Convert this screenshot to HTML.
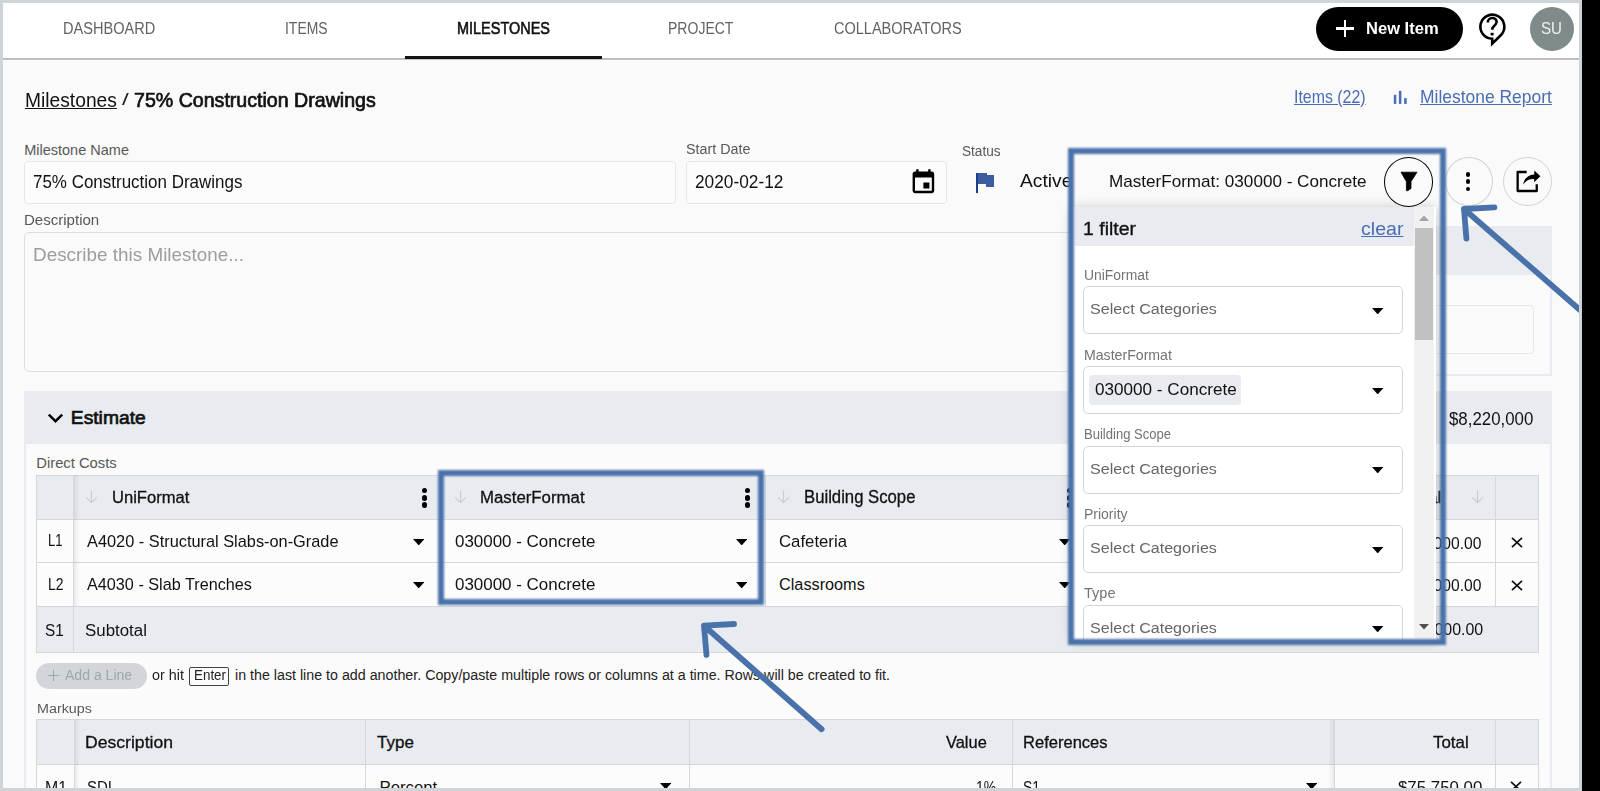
<!DOCTYPE html><html><head><meta charset="utf-8"><style>
html,body{margin:0;padding:0;width:1600px;height:791px;overflow:hidden;background:#000;}
.b{position:absolute;}
.t{position:absolute;white-space:nowrap;line-height:1;font-family:"Liberation Sans",sans-serif;transform-origin:0 0;}
</style></head><body>
<div class="b " style="left:0px;top:0px;width:1600px;height:791px;background:#000;"></div>
<div class="b " style="left:0px;top:0px;width:1582px;height:791px;background:#cfd4d8;"></div>
<div class="b " style="left:3px;top:3px;width:1576px;height:785px;background:#fafafa;"></div>
<div class="b " style="left:3px;top:3px;width:1576px;height:55px;background:#fff;"></div>
<div class="b " style="left:3px;top:58px;width:1576px;height:2px;background:linear-gradient(#b4b4b4,#c8c8c8);"></div>
<div class="b " style="left:405px;top:56px;width:197px;height:3px;background:#151515;"></div>
<div class="t" style="left:62.50px;top:21px;font-size:16.75px;color:#626262;transform:scaleX(0.8698);">DASHBOARD</div>
<div class="t" style="left:284.80px;top:21px;font-size:16.75px;color:#626262;transform:scaleX(0.8325);">ITEMS</div>
<div class="t" style="left:457.20px;top:21px;font-size:16.75px;color:#111;transform:scaleX(0.8635);-webkit-text-stroke:0.6px #111;">MILESTONES</div>
<div class="t" style="left:668.00px;top:21px;font-size:16.75px;color:#626262;transform:scaleX(0.8370);">PROJECT</div>
<div class="t" style="left:834.00px;top:21px;font-size:16.75px;color:#626262;transform:scaleX(0.8670);">COLLABORATORS</div>
<div class="b " style="left:1316px;top:7px;width:147px;height:44px;background:#000;border-radius:22px;"></div>
<div class="b " style="left:1336.2px;top:27.4px;width:17.799999999999955px;height:2.5px;background:#fff;"></div>
<div class="b " style="left:1343.9px;top:19.7px;width:2.5px;height:17.8px;background:#fff;"></div>
<div class="t" style="left:1365.60px;top:20px;font-size:17.0px;color:#fff;font-weight:bold;transform:scaleX(0.9728);">New Item</div>
<svg class="b" style="left:1476px;top:11px" width="32" height="36" viewBox="0 0 32 36">
<path d="M16.2 27.7 A12 12 0 1 1 25.2 23.8 L16.2 32.6 Z" fill="none" stroke="#000" stroke-width="2.6" stroke-linejoin="miter"/>
<path d="M11.8 11.6 C11.8 8.6 14 7 16.2 7 C18.6 7 20.6 8.6 20.6 11 C20.6 13.4 18 14.6 16.4 17.2 L16.4 18.8" fill="none" stroke="#000" stroke-width="2.6"/>
<rect x="14.6" y="21.8" width="3" height="2.6" fill="#000"/>
</svg>
<div class="b " style="left:1530px;top:7px;width:44px;height:44px;background:#7e8b8a;border-radius:50%;"></div>
<div class="t" style="left:1541.00px;top:20px;font-size:16.5px;color:#eef1f1;transform:scaleX(0.9156);">SU</div>
<div class="t" style="left:24.50px;top:91px;font-size:19.75px;color:#111;transform:scaleX(0.9735);text-decoration:underline;">Milestones</div>
<div class="t" style="left:122.00px;top:91px;font-size:17.0px;color:#222;transform:scaleX(1.4286);">/</div>
<div class="t" style="left:133.80px;top:91px;font-size:19.75px;color:#111;transform:scaleX(0.9921);-webkit-text-stroke:0.7px #111;">75% Construction Drawings</div>
<div class="t" style="left:1293.60px;top:89px;font-size:17.75px;color:#4a6db5;transform:scaleX(0.8964);text-decoration:underline;">Items (22)</div>
<svg class="b" style="left:1390px;top:88px" width="20" height="18" viewBox="0 0 20 18"><rect x="3.8" y="6.8" width="2.5" height="9.1" fill="#4a6db5"/><rect x="8.9" y="2.9" width="2.5" height="13" fill="#4a6db5"/><rect x="14.1" y="10.1" width="2.6" height="5.8" fill="#4a6db5"/></svg>
<div class="t" style="left:1420.00px;top:89px;font-size:17.75px;color:#4a6db5;transform:scaleX(0.9829);text-decoration:underline;">Milestone Report</div>
<div class="t" style="left:24.20px;top:143px;font-size:14.5px;color:#585858;">Milestone Name</div>
<div class="b " style="left:23.5px;top:161px;width:652.0px;height:42.5px;background:#fcfcfd;border:1px solid #e4e7ea;border-radius:4px;box-sizing:border-box;"></div>
<div class="t" style="left:32.60px;top:173px;font-size:18.75px;color:#111;transform:scaleX(0.9050);">75% Construction Drawings</div>
<div class="t" style="left:686.00px;top:142px;font-size:14.0px;color:#585858;transform:scaleX(1.0238);">Start Date</div>
<div class="b " style="left:686px;top:161px;width:261px;height:42.5px;background:#fcfcfd;border:1px solid #e4e7ea;border-radius:4px;box-sizing:border-box;"></div>
<div class="t" style="left:695.00px;top:173px;font-size:18.0px;color:#111;transform:scaleX(0.9601);">2020-02-12</div>
<svg class="b" style="left:909px;top:167.8px" width="28.8" height="28.8" viewBox="0 0 24 24"><path d="M17 12h-5v5h5v-5zM16 1v2H8V1H6v2H5c-1.11 0-1.99.9-1.99 2L3 19a2 2 0 0 0 2 2h14c1.1 0 2-.9 2-2V5c0-1.1-.9-2-2-2h-1V1h-2zm3 18H5V8h14v11z" fill="#000"/></svg>
<div class="t" style="left:962.40px;top:144px;font-size:14.0px;color:#585858;transform:scaleX(0.9725);">Status</div>
<div class="b " style="left:975.9px;top:172.8px;width:11.100000000000023px;height:11.199999999999989px;background:#3d5c9e;"></div>
<div class="b " style="left:985.6px;top:175px;width:8.399999999999977px;height:11.900000000000006px;background:#3d5c9e;"></div>
<div class="b " style="left:975.9px;top:172.8px;width:2.2000000000000455px;height:20.299999999999983px;background:#1d3d8f;"></div>
<div class="t" style="left:1019.60px;top:172px;font-size:18.25px;color:#111;transform:scaleX(1.0537);">Active</div>
<div class="t" style="left:24.20px;top:213px;font-size:14.5px;color:#585858;transform:scaleX(1.0372);">Description</div>
<div class="b " style="left:23.5px;top:231.8px;width:1096.5px;height:140.2px;background:#fafafa;border:1px solid #dcdfe2;border-radius:5px;box-sizing:border-box;"></div>
<div class="t" style="left:33.00px;top:245px;font-size:19.0px;color:#9d9d9d;transform:scaleX(0.9942);">Describe this Milestone...</div>
<div class="b " style="left:1120px;top:226px;width:432px;height:150px;background:#fafafa;border:2px solid #e8ebef;border-top:none;box-sizing:border-box;"></div>
<div class="b " style="left:1120px;top:226px;width:432px;height:49px;background:#e8ebef;"></div>
<div class="b " style="left:1140px;top:305px;width:394px;height:49px;border:1px solid #e6e8eb;border-radius:4px;box-sizing:border-box;"></div>
<div class="t" style="left:1109.00px;top:173px;font-size:17.0px;color:#111;transform:scaleX(1.0054);">MasterFormat: 030000 - Concrete</div>
<div class="b " style="left:1384.2px;top:157px;width:49.200000000000045px;height:49.5px;border:1.5px solid #000;border-radius:50%;box-sizing:border-box;background:#fafafa;z-index:9;"></div>
<svg class="b" style="left:1400px;top:171px;z-index:10" width="18" height="21" viewBox="0 0 18 21"><path d="M1 1.2 H17 L11 10.6 V17.5 L7.6 19.8 L6.4 19.6 V10.6 Z" fill="#000" stroke="#000" stroke-width="0.8" stroke-linejoin="round"/></svg>
<div class="b " style="left:1445.4px;top:157.3px;width:47.19999999999982px;height:48.599999999999994px;border:1px solid #cfd3d6;border-radius:50%;box-sizing:border-box;"></div>
<div class="b " style="left:1465.6px;top:171.8px;width:4.800000000000182px;height:4.799999999999983px;background:#000;border-radius:50%;"></div>
<div class="b " style="left:1465.6px;top:179.2px;width:4.800000000000182px;height:4.800000000000011px;background:#000;border-radius:50%;"></div>
<div class="b " style="left:1465.6px;top:186.6px;width:4.800000000000182px;height:4.800000000000011px;background:#000;border-radius:50%;"></div>
<div class="b " style="left:1503px;top:157.3px;width:48.59999999999991px;height:48.599999999999994px;border:1px solid #cfd3d6;border-radius:50%;box-sizing:border-box;"></div>
<svg class="b" style="left:1514px;top:168px" width="30" height="27" viewBox="0 0 30 27">
<path d="M12.7 4 H3.65 V23 H22.75 V16.3" fill="none" stroke="#000" stroke-width="2.3" stroke-linejoin="round"/>
<path d="M9 16.8 Q11 6.8 20.3 6.4 V2.4 L26.4 8.2 L20.1 14.2 V11 Q13 10.6 9 16.8 Z" fill="#000"/>
</svg>
<div class="b " style="left:23.5px;top:391.3px;width:1528.0px;height:408.7px;background:#fbfbfb;border:2px solid #e8ebef;border-top:none;box-sizing:border-box;"></div>
<div class="b " style="left:23.5px;top:391.3px;width:1528.0px;height:52.69999999999999px;background:#e8ebef;"></div>
<svg class="b" style="left:46px;top:411px" width="19" height="14" viewBox="0 0 19 14"><path d="M2.8 3.6 L9.5 10.2 L16.2 3.6" fill="none" stroke="#000" stroke-width="2.4"/></svg>
<div class="t" style="left:70.80px;top:408px;font-size:19.25px;color:#111;-webkit-text-stroke:0.7px #111;">Estimate</div>
<div class="t" style="left:1449.00px;top:411px;font-size:17.75px;color:#111;transform:scaleX(0.9489);">$8,220,000</div>
<div class="t" style="left:36.30px;top:456px;font-size:14.75px;color:#585858;">Direct Costs</div>
<div class="b " style="left:36px;top:475px;width:1503px;height:178px;background:#fcfcfc;border:1px solid #d4d7db;box-sizing:border-box;"></div>
<div class="b " style="left:36px;top:475px;width:1503px;height:45px;background:#e8ebef;border:1px solid #d4d7db;box-sizing:border-box;"></div>
<div class="b " style="left:36px;top:605.5px;width:1503px;height:47.5px;background:#e8ebef;border:1px solid #d4d7db;box-sizing:border-box;"></div>
<div class="b " style="left:36px;top:562px;width:1503px;height:1px;background:#d4d7db;"></div>
<div class="b " style="left:73px;top:475px;width:1px;height:130.5px;background:#d4d7db;"></div>
<div class="b " style="left:441px;top:475px;width:1px;height:130.5px;background:#d4d7db;"></div>
<div class="b " style="left:765px;top:475px;width:1px;height:130.5px;background:#d4d7db;"></div>
<div class="b " style="left:1085px;top:475px;width:1px;height:130.5px;background:#d4d7db;"></div>
<div class="b " style="left:1495px;top:475px;width:1px;height:130.5px;background:#d4d7db;"></div>
<div class="b " style="left:73px;top:605.5px;width:1px;height:47.5px;background:#d4d7db;"></div>
<div class="b " style="left:74px;top:475px;width:6px;height:130.5px;background:linear-gradient(to right,rgba(0,0,0,0.07),rgba(0,0,0,0));"></div>
<svg class="b" style="left:85.2px;top:490.2px" width="13" height="14" viewBox="0 0 13 14"><path d="M6.5 0.5 V12.6 M1.2 7.4 L6.5 12.6 L11.8 7.4" fill="none" stroke="#c9cdd1" stroke-width="1.2"/></svg>
<svg class="b" style="left:453.8px;top:490.4px" width="13" height="14" viewBox="0 0 13 14"><path d="M6.5 0.5 V12.6 M1.2 7.4 L6.5 12.6 L11.8 7.4" fill="none" stroke="#c9cdd1" stroke-width="1.2"/></svg>
<svg class="b" style="left:777px;top:490.2px" width="13" height="14" viewBox="0 0 13 14"><path d="M6.5 0.5 V12.6 M1.2 7.4 L6.5 12.6 L11.8 7.4" fill="none" stroke="#c9cdd1" stroke-width="1.2"/></svg>
<svg class="b" style="left:1471.3px;top:490.2px" width="13" height="14" viewBox="0 0 13 14"><path d="M6.5 0.5 V12.6 M1.2 7.4 L6.5 12.6 L11.8 7.4" fill="none" stroke="#c9cdd1" stroke-width="1.2"/></svg>
<div class="b " style="left:421.6px;top:488.0px;width:5.399999999999977px;height:5.399999999999977px;background:#000;border-radius:50%;"></div>
<div class="b " style="left:421.6px;top:495.2px;width:5.399999999999977px;height:5.399999999999977px;background:#000;border-radius:50%;"></div>
<div class="b " style="left:421.6px;top:502.4px;width:5.399999999999977px;height:5.399999999999977px;background:#000;border-radius:50%;"></div>
<div class="b " style="left:745px;top:488.0px;width:5.399999999999977px;height:5.399999999999977px;background:#000;border-radius:50%;"></div>
<div class="b " style="left:745px;top:495.2px;width:5.399999999999977px;height:5.399999999999977px;background:#000;border-radius:50%;"></div>
<div class="b " style="left:745px;top:502.4px;width:5.399999999999977px;height:5.399999999999977px;background:#000;border-radius:50%;"></div>
<div class="b " style="left:1067px;top:488.0px;width:5.400000000000091px;height:5.399999999999977px;background:#000;border-radius:50%;"></div>
<div class="b " style="left:1067px;top:495.2px;width:5.400000000000091px;height:5.399999999999977px;background:#000;border-radius:50%;"></div>
<div class="b " style="left:1067px;top:502.4px;width:5.400000000000091px;height:5.399999999999977px;background:#000;border-radius:50%;"></div>
<div class="t" style="left:111.60px;top:489px;font-size:16.5px;color:#111;transform:scaleX(1.0045);-webkit-text-stroke:0.3px #111;">UniFormat</div>
<div class="t" style="left:480.40px;top:489px;font-size:17.25px;color:#111;transform:scaleX(0.9741);-webkit-text-stroke:0.3px #111;">MasterFormat</div>
<div class="t" style="left:803.60px;top:488px;font-size:18.0px;color:#111;transform:scaleX(0.9279);-webkit-text-stroke:0.3px #111;">Building Scope</div>
<div class="t" style="left:1404.00px;top:490px;font-size:16.75px;color:#111;transform:scaleX(1.0610);-webkit-text-stroke:0.3px #111;">Total</div>
<div class="t" style="left:48.00px;top:533px;font-size:16.0px;color:#111;transform:scaleX(0.8108);">L1</div>
<div class="t" style="left:47.60px;top:577px;font-size:16.0px;color:#111;transform:scaleX(0.8671);">L2</div>
<div class="t" style="left:87.00px;top:534px;font-size:15.75px;color:#111;transform:scaleX(1.0372);">A4020 - Structural Slabs-on-Grade</div>
<div class="t" style="left:87.00px;top:577px;font-size:15.75px;color:#111;transform:scaleX(1.0296);">A4030 - Slab Trenches</div>
<div class="t" style="left:455.40px;top:533px;font-size:16.5px;color:#111;transform:scaleX(1.0270);">030000 - Concrete</div>
<div class="t" style="left:455.40px;top:576px;font-size:16.5px;color:#111;transform:scaleX(1.0270);">030000 - Concrete</div>
<div class="t" style="left:779.00px;top:533px;font-size:16.25px;color:#111;transform:scaleX(1.0307);">Cafeteria</div>
<div class="t" style="left:779.00px;top:576px;font-size:16.25px;color:#111;">Classrooms</div>
<svg class="b" style="left:412.5px;top:538.7px;" width="11.4" height="6.4" viewBox="0 0 12 6" preserveAspectRatio="none"><path d="M0 0 H12 L6 6 Z" fill="#000"/></svg>
<svg class="b" style="left:412.5px;top:581.5px;" width="11.4" height="6.4" viewBox="0 0 12 6" preserveAspectRatio="none"><path d="M0 0 H12 L6 6 Z" fill="#000"/></svg>
<svg class="b" style="left:735.5px;top:538.7px;" width="11.4" height="6.4" viewBox="0 0 12 6" preserveAspectRatio="none"><path d="M0 0 H12 L6 6 Z" fill="#000"/></svg>
<svg class="b" style="left:735.5px;top:581.5px;" width="11.4" height="6.4" viewBox="0 0 12 6" preserveAspectRatio="none"><path d="M0 0 H12 L6 6 Z" fill="#000"/></svg>
<svg class="b" style="left:1058.5px;top:538.7px;" width="11.4" height="6.4" viewBox="0 0 12 6" preserveAspectRatio="none"><path d="M0 0 H12 L6 6 Z" fill="#000"/></svg>
<svg class="b" style="left:1058.5px;top:581.5px;" width="11.4" height="6.4" viewBox="0 0 12 6" preserveAspectRatio="none"><path d="M0 0 H12 L6 6 Z" fill="#000"/></svg>
<div class="t" style="left:1390.00px;top:535px;font-size:16.5px;color:#111;transform:scaleX(0.9485);">$1610000.00</div>
<div class="t" style="left:1390.00px;top:577px;font-size:16.5px;color:#111;transform:scaleX(0.9485);">$6610000.00</div>
<svg class="b" style="left:1511px;top:537px" width="12" height="11" viewBox="0 0 12 11"><path d="M1 0.8 L11 10.2 M11 0.8 L1 10.2" stroke="#111" stroke-width="1.7"/></svg>
<svg class="b" style="left:1511px;top:579.5px" width="12" height="11" viewBox="0 0 12 11"><path d="M1 0.8 L11 10.2 M11 0.8 L1 10.2" stroke="#111" stroke-width="1.7"/></svg>
<div class="t" style="left:44.90px;top:622px;font-size:17.25px;color:#111;transform:scaleX(0.8849);">S1</div>
<div class="t" style="left:84.50px;top:622px;font-size:17.25px;color:#111;transform:scaleX(0.9778);">Subtotal</div>
<div class="t" style="left:1390.00px;top:621px;font-size:16.25px;color:#111;transform:scaleX(0.9821);">$8220000.00</div>
<div class="b " style="left:36px;top:663.4px;width:110.6px;height:25.899999999999977px;background:#d2d6da;border-radius:13px;"></div>
<div class="b " style="left:47.8px;top:674.9px;width:11.200000000000003px;height:1.5px;background:#9fa6ac;"></div>
<div class="b " style="left:52.65px;top:669.8px;width:1.5px;height:11.5px;background:#9fa6ac;"></div>
<div class="t" style="left:64.70px;top:668px;font-size:14.25px;color:#a0a7ad;transform:scaleX(0.9851);">Add a Line</div>
<div class="t" style="left:151.90px;top:668px;font-size:14.25px;color:#222;transform:scaleX(1.0061);">or hit</div>
<div class="b " style="left:189.4px;top:666.6px;width:39.69999999999999px;height:19.899999999999977px;border:1px solid #444;border-radius:2px;box-sizing:border-box;"></div>
<div class="t" style="left:193.50px;top:668px;font-size:14.25px;color:#222;transform:scaleX(0.9396);">Enter</div>
<div class="t" style="left:235.00px;top:668px;font-size:14.25px;color:#222;">in the last line to add another. Copy/paste multiple rows or columns at a time. Rows will be created to fit.</div>
<div class="t" style="left:36.60px;top:702px;font-size:13.25px;color:#585858;transform:scaleX(1.0804);">Markups</div>
<div class="b " style="left:36px;top:719px;width:1503px;height:81px;background:#fcfcfc;border:1px solid #d4d7db;box-sizing:border-box;"></div>
<div class="b " style="left:36px;top:719px;width:1503px;height:46px;background:#e8ebef;border:1px solid #d4d7db;box-sizing:border-box;"></div>
<div class="b " style="left:73.5px;top:720px;width:1.0px;height:80px;background:#d4d7db;"></div>
<div class="b " style="left:364.5px;top:720px;width:1.0px;height:80px;background:#d4d7db;"></div>
<div class="b " style="left:688.5px;top:720px;width:1.0px;height:80px;background:#d4d7db;"></div>
<div class="b " style="left:1011.5px;top:720px;width:1.0px;height:80px;background:#d4d7db;"></div>
<div class="b " style="left:1333.5px;top:720px;width:1.0px;height:80px;background:#d4d7db;"></div>
<div class="b " style="left:1495px;top:720px;width:1px;height:80px;background:#d4d7db;"></div>
<div class="b " style="left:74.5px;top:720px;width:5.5px;height:80px;background:linear-gradient(to right,rgba(0,0,0,0.07),rgba(0,0,0,0));"></div>
<div class="b " style="left:1327.5px;top:720px;width:6.0px;height:80px;background:linear-gradient(to left,rgba(0,0,0,0.07),rgba(0,0,0,0));"></div>
<div class="t" style="left:84.50px;top:734px;font-size:17.0px;color:#111;transform:scaleX(1.0353);-webkit-text-stroke:0.3px #111;">Description</div>
<div class="t" style="left:377.00px;top:734px;font-size:17.0px;color:#111;-webkit-text-stroke:0.3px #111;">Type</div>
<div class="t" style="left:945.50px;top:734px;font-size:17.0px;color:#111;transform:scaleX(0.9658);-webkit-text-stroke:0.3px #111;">Value</div>
<div class="t" style="left:1023.00px;top:734px;font-size:17.0px;color:#111;transform:scaleX(0.9729);-webkit-text-stroke:0.3px #111;">References</div>
<div class="t" style="left:1433.00px;top:734px;font-size:17.0px;color:#111;transform:scaleX(0.9953);-webkit-text-stroke:0.3px #111;">Total</div>
<div class="t" style="left:45.00px;top:780px;font-size:16.75px;color:#111;transform:scaleX(0.9449);">M1</div>
<div class="t" style="left:87.00px;top:780px;font-size:16.75px;color:#111;transform:scaleX(0.8964);">SDI</div>
<div class="t" style="left:379.50px;top:780px;font-size:16.75px;color:#111;">Percent</div>
<div class="t" style="left:976.00px;top:779px;font-size:16.5px;color:#111;transform:scaleX(0.8388);">1%</div>
<div class="t" style="left:1023.00px;top:780px;font-size:16.75px;color:#111;transform:scaleX(0.8285);">S1</div>
<div class="t" style="left:1397.50px;top:779px;font-size:16.5px;color:#111;transform:scaleX(1.0208);">$75,750.00</div>
<svg class="b" style="left:660px;top:783px;" width="11.4" height="6.4" viewBox="0 0 12 6" preserveAspectRatio="none"><path d="M0 0 H12 L6 6 Z" fill="#000"/></svg>
<svg class="b" style="left:1305.6px;top:783px;" width="11.4" height="6.4" viewBox="0 0 12 6" preserveAspectRatio="none"><path d="M0 0 H12 L6 6 Z" fill="#000"/></svg>
<svg class="b" style="left:1510px;top:781px" width="12" height="11" viewBox="0 0 12 11"><path d="M1 0.8 L11 10.2 M11 0.8 L1 10.2" stroke="#111" stroke-width="1.7"/></svg>
<div class="b " style="left:1072px;top:206.5px;width:364px;height:433.5px;background:#fff;box-shadow:0 1px 12px rgba(0,0,0,0.22);z-index:5;"></div>
<div class="b" style="left:0;top:0;width:1600px;height:791px;z-index:6;clip-path:inset(206.5px 164px 151px 1072px)">
<div class="b " style="left:1075px;top:206.5px;width:339px;height:39.19999999999999px;background:#e8ebef;z-index:6;"></div>
<div class="t" style="left:1083.00px;top:219px;font-size:19.25px;color:#111;transform:scaleX(1.0104);-webkit-text-stroke:0.35px #111;z-index:7;">1 filter</div>
<div class="t" style="left:1361.20px;top:219px;font-size:19.25px;color:#4a6db5;transform:scaleX(1.0174);text-decoration:underline;z-index:7;">clear</div>
<div class="b " style="left:1414px;top:206.5px;width:20px;height:431.5px;background:#f1f1f1;z-index:6;"></div>
<div class="b " style="left:1415.3px;top:227.6px;width:17.700000000000045px;height:112.20000000000002px;background:#c1c1c1;z-index:7;"></div>
<svg class="b" style="left:1419px;top:215px;z-index:7" width="10" height="6" viewBox="0 0 10 6"><path d="M0 6 L5 0.5 L10 6Z" fill="#a3a3a3"/></svg>
<svg class="b" style="left:1419px;top:624px;z-index:7" width="10" height="6" viewBox="0 0 10 6"><path d="M0 0 L5 5.5 L10 0Z" fill="#505050"/></svg>
<div class="t" style="left:1083.50px;top:268px;font-size:14.0px;color:#737373;transform:scaleX(0.9927);z-index:7;">UniFormat</div>
<div class="b " style="left:1083.3px;top:286px;width:320.20000000000005px;height:48px;background:#fff;border:1px solid #d3d6d9;border-radius:5px;box-sizing:border-box;z-index:6;"></div>
<div class="t" style="left:1089.80px;top:301px;font-size:15.5px;color:#666;transform:scaleX(1.0370);z-index:7;">Select Categories</div>
<svg class="b" style="left:1372.4px;top:307.5px;z-index:7;" width="11.4" height="6.4" viewBox="0 0 12 6" preserveAspectRatio="none"><path d="M0 0 H12 L6 6 Z" fill="#000"/></svg>
<div class="t" style="left:1083.50px;top:348px;font-size:14.5px;color:#737373;transform:scaleX(0.9738);z-index:7;">MasterFormat</div>
<div class="b " style="left:1083.3px;top:366px;width:320.20000000000005px;height:48px;background:#fff;border:1px solid #d3d6d9;border-radius:5px;box-sizing:border-box;z-index:6;"></div>
<div class="b " style="left:1089.3px;top:375px;width:151.9000000000001px;height:30.30000000000001px;background:#e8ebef;border-radius:4px;z-index:7;"></div>
<div class="t" style="left:1094.70px;top:381px;font-size:16.5px;color:#111;transform:scaleX(1.0373);z-index:8;">030000 - Concrete</div>
<svg class="b" style="left:1372.4px;top:387.5px;z-index:7;" width="11.4" height="6.4" viewBox="0 0 12 6" preserveAspectRatio="none"><path d="M0 0 H12 L6 6 Z" fill="#000"/></svg>
<div class="t" style="left:1083.50px;top:427px;font-size:14.5px;color:#737373;transform:scaleX(0.8996);z-index:7;">Building Scope</div>
<div class="b " style="left:1083.3px;top:445.5px;width:320.20000000000005px;height:48.0px;background:#fff;border:1px solid #d3d6d9;border-radius:5px;box-sizing:border-box;z-index:6;"></div>
<div class="t" style="left:1089.80px;top:461px;font-size:15.5px;color:#666;transform:scaleX(1.0370);z-index:7;">Select Categories</div>
<svg class="b" style="left:1372.4px;top:467.0px;z-index:7;" width="11.4" height="6.4" viewBox="0 0 12 6" preserveAspectRatio="none"><path d="M0 0 H12 L6 6 Z" fill="#000"/></svg>
<div class="t" style="left:1083.50px;top:506px;font-size:15.25px;color:#737373;transform:scaleX(0.9172);z-index:7;">Priority</div>
<div class="b " style="left:1083.3px;top:525.3px;width:320.20000000000005px;height:48.0px;background:#fff;border:1px solid #d3d6d9;border-radius:5px;box-sizing:border-box;z-index:6;"></div>
<div class="t" style="left:1089.80px;top:540px;font-size:15.5px;color:#666;transform:scaleX(1.0370);z-index:7;">Select Categories</div>
<svg class="b" style="left:1372.4px;top:546.8px;z-index:7;" width="11.4" height="6.4" viewBox="0 0 12 6" preserveAspectRatio="none"><path d="M0 0 H12 L6 6 Z" fill="#000"/></svg>
<div class="t" style="left:1083.50px;top:586px;font-size:14.25px;color:#737373;transform:scaleX(1.0187);z-index:7;">Type</div>
<div class="b " style="left:1083.3px;top:604.5px;width:320.20000000000005px;height:48.0px;background:#fff;border:1px solid #d3d6d9;border-radius:5px;box-sizing:border-box;z-index:6;"></div>
<div class="t" style="left:1089.80px;top:620px;font-size:15.5px;color:#666;transform:scaleX(1.0370);z-index:7;">Select Categories</div>
<svg class="b" style="left:1372.4px;top:626.0px;z-index:7;" width="11.4" height="6.4" viewBox="0 0 12 6" preserveAspectRatio="none"><path d="M0 0 H12 L6 6 Z" fill="#000"/></svg>
</div>
<div class="b " style="left:1067.9px;top:148px;width:378.5999999999999px;height:497.1px;border:6.4px solid #4a72aa;box-sizing:border-box;z-index:20;filter:blur(0.8px);"></div>
<div class="b " style="left:438.1px;top:470.4px;width:325.69999999999993px;height:134.89999999999998px;border:6.5px solid #4a72aa;box-sizing:border-box;z-index:20;filter:blur(0.8px);"></div>
<svg class="b" style="left:0;top:0;z-index:21" width="1600" height="791" viewBox="0 0 1600 791">
<g stroke="#4a72aa" stroke-width="5.8" stroke-linecap="round" stroke-linejoin="round" fill="none" style="filter:blur(0.4px)">
<path d="M734 624 L704 625.7 L706.5 654.9 M704 625.7 L821.6 729.2"/>
<path d="M1494.4 207.3 L1464 209 L1466.4 238.5 M1464 209 L1580 310"/>
</g></svg>
<div class="b " style="left:1579px;top:0px;width:3px;height:791px;background:#cfd4d8;z-index:30;"></div>
<div class="b " style="left:1582px;top:0px;width:18px;height:791px;background:#000;z-index:30;"></div>
<div class="b " style="left:0px;top:788px;width:1582px;height:3px;background:#cfd4d8;z-index:30;"></div>
</body></html>
